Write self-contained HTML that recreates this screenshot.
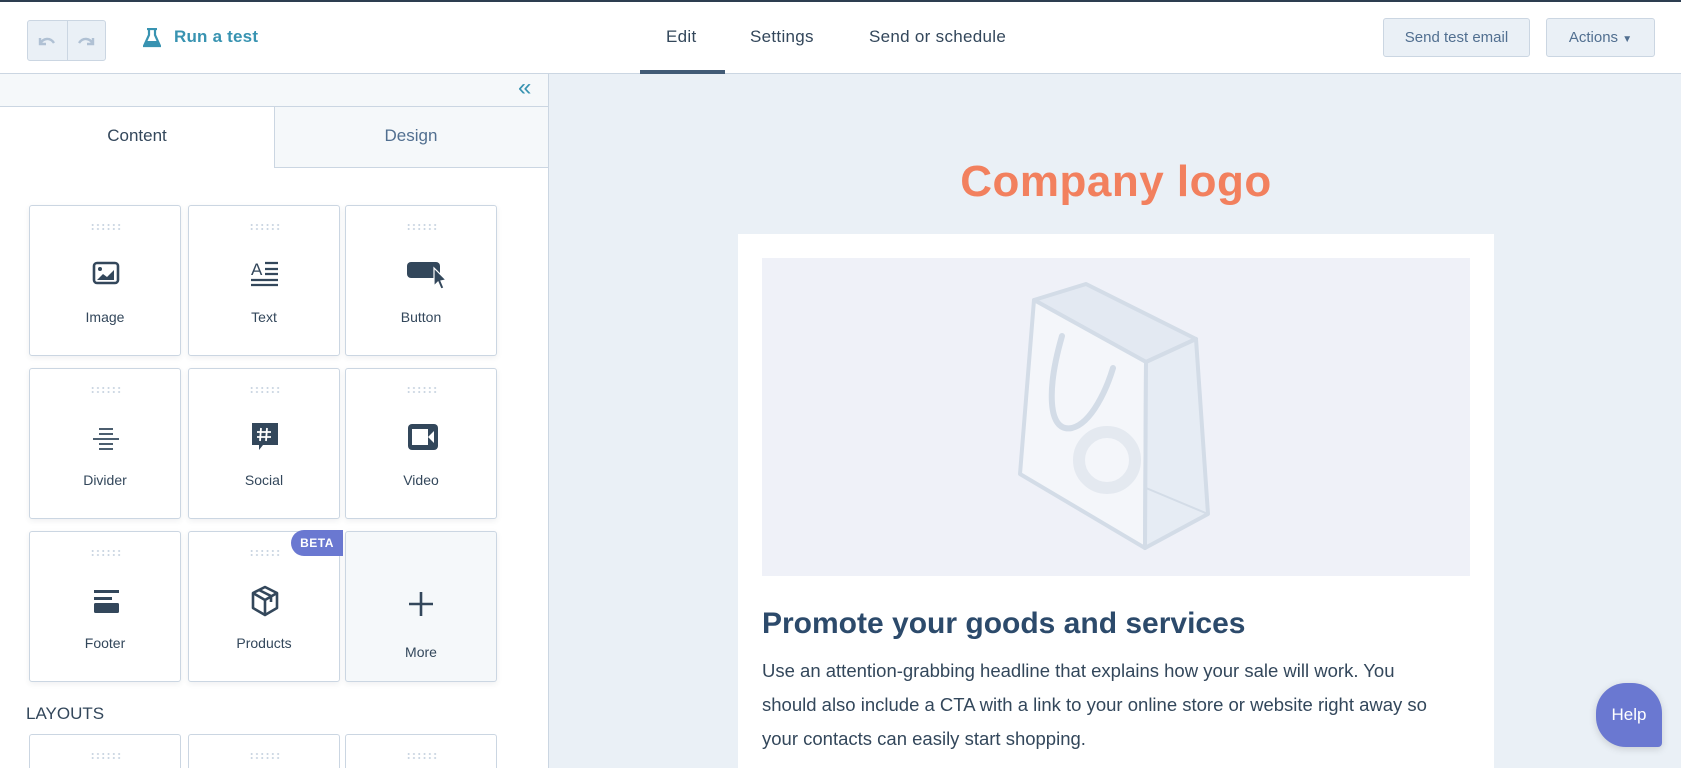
<!DOCTYPE html>
<html style="overflow:hidden;width:1681px;height:768px"><head><meta charset="utf-8"><style>
*{box-sizing:border-box;margin:0;padding:0}
body{width:1681px;height:768px;overflow:hidden;font-family:"Liberation Sans",sans-serif;background:#eaf0f6;position:relative;color:#33475b}
.abs{position:absolute}
#top{left:0;top:0;width:1681px;height:74px;background:#fff;border-top:2px solid #2d3e50;border-bottom:1px solid #cbd6e2}
.undo{left:27px;top:18px;width:79px;height:41px;border:1px solid #cbd6e2;border-radius:3px;background:#eaf0f6}
.undo div{position:absolute;left:39px;top:0;width:1px;height:39px;background:#cbd6e2}
.tab{top:25px;font-size:17px;color:#33475b;letter-spacing:.3px}
.btn{top:16px;height:39px;border:1px solid #cbd6e2;border-radius:3px;background:#eaf0f6;color:#516f90;font-size:15px;text-align:center;line-height:37px}
#left{left:0;top:74px;width:549px;height:694px;background:#fff;border-right:1px solid #cbd6e2;overflow:hidden}
.coll{left:0;top:0;width:548px;height:33px;background:#f5f8fa;border-bottom:1px solid #cbd6e2}
.card{width:152px;height:151px;border:1px solid #cbd6e2;border-radius:3px;background:#fff;box-shadow:0 2px 6px rgba(45,62,80,.08)}
.card.short{height:34px;border-bottom:none;border-radius:3px 3px 0 0;box-shadow:none}
.card .dots{position:absolute;left:60px;top:17px;width:32px;height:8px;background-image:radial-gradient(circle,#cbd6e2 0.9px,transparent 1.1px);background-size:5.3px 4px}
.card .lbl{position:absolute;left:0;width:100%;top:103px;text-align:center;font-size:14px;color:#33475b}
.card svg{position:absolute;left:61px;top:52px}
</style></head><body>
<div id="top" class="abs">
 <div class="abs undo"><div></div>
  <svg class="abs" style="left:9px;top:13px" width="20" height="14" viewBox="0 0 20 14"><path d="M3 4 L3 10 L9 10 M3 10 C6 4 13 3 17 9" fill="none" stroke="#b0c1d4" stroke-width="2.4"/></svg>
  <svg class="abs" style="left:48px;top:13px" width="20" height="14" viewBox="0 0 20 14"><path d="M17 4 L17 10 L11 10 M17 10 C14 4 7 3 3 9" fill="none" stroke="#b0c1d4" stroke-width="2.4"/></svg>
 </div>
 <svg class="abs" style="left:143px;top:26px" width="18" height="20" viewBox="0 0 18 20"><path d="M4 1 H14 M6 1 V7 L1 18 H17 L12 7 V1" fill="none" stroke="#3893b1" stroke-width="2.2"/><path d="M3 13 H15 L17 18 H1Z" fill="#3893b1"/></svg>
 <div class="abs" style="left:174px;top:25px;font-size:17px;color:#3893b1;font-weight:bold;letter-spacing:.2px">Run a test</div>
 <div class="abs tab" style="left:666px">Edit</div>
 <div class="abs tab" style="left:750px">Settings</div>
 <div class="abs tab" style="left:869px">Send or schedule</div>
 <div class="abs" style="left:640px;top:68px;width:85px;height:4px;background:#425b76"></div>
 <div class="abs btn" style="left:1383px;width:147px">Send test email</div>
 <div class="abs btn" style="left:1546px;width:109px">Actions <span style="font-size:10px">&#9660;</span></div>
</div>
<div id="left" class="abs">
 <div class="abs coll"><div class="abs" style="left:518px;top:1px;font-size:24px;color:#3893b1;line-height:26px">«</div></div>
 <div class="abs" style="left:274px;top:33px;width:274px;height:61px;background:#f5f8fa;border-left:1px solid #cbd6e2;border-bottom:1px solid #cbd6e2"></div>
 <div class="abs" style="left:0;top:52px;width:274px;text-align:center;font-size:17px;color:#33475b">Content</div>
 <div class="abs" style="left:274px;top:52px;width:274px;text-align:center;font-size:17px;color:#516f90">Design</div>

 <div class="abs card" style="left:29px;top:131px"><div class="dots"></div>
  <svg width="30" height="30" viewBox="0 0 30 30"><rect x="3" y="5" width="24" height="20" rx="3" fill="none" stroke="#33475b" stroke-width="2.6"/><circle cx="9" cy="11" r="2" fill="#33475b"/><path d="M6 22 L12 16 L16 19 L23 12 V22Z" fill="#33475b"/></svg>
  <div class="lbl">Image</div></div>
 <div class="abs card" style="left:188px;top:131px"><div class="dots"></div>
  <svg width="30" height="30" viewBox="0 0 30 30"><text x="1" y="17" font-family="Liberation Sans" font-size="17" fill="#33475b">A</text><path d="M15 5 H28 M15 11 H28 M15 16 H28 M1 22 H28 M1 27 H28" stroke="#33475b" stroke-width="2.2"/></svg>
  <div class="lbl">Text</div></div>
 <div class="abs card" style="left:345px;top:131px"><div class="dots"></div>
  <svg width="40" height="34" viewBox="0 0 40 34"><rect x="0" y="4" width="33" height="16" rx="4" fill="#33475b"/><path d="M27 10 L27 28 L31 24 L34 31 L37 30 L34 23 L39 22Z" fill="#33475b" stroke="#fff" stroke-width="1.2"/></svg>
  <div class="lbl">Button</div></div>

 <div class="abs card" style="left:29px;top:294px"><div class="dots"></div>
  <svg width="30" height="30" viewBox="0 0 30 30"><path d="M8 8 H22 M8 13 H22 M2 18 H28 M8 23 H22 M8 28 H22" stroke="#33475b" stroke-width="1.8"/></svg>
  <div class="lbl">Divider</div></div>
 <div class="abs card" style="left:188px;top:294px"><div class="dots"></div>
  <svg width="30" height="32" viewBox="0 0 30 32"><path d="M2 2 H28 V24 H13 L9 29 V24 H2Z" fill="#33475b"/><path d="M11 7 L10 20 M17 7 L16 20 M7 11 H21 M7 16 H21" stroke="#fff" stroke-width="1.8"/></svg>
  <div class="lbl">Social</div></div>
 <div class="abs card" style="left:345px;top:294px"><div class="dots"></div>
  <svg width="32" height="30" viewBox="0 0 32 30"><rect x="1" y="3" width="30" height="26" rx="4" fill="#33475b"/><rect x="5" y="8" width="16" height="16" fill="#fff"/><path d="M21 16 L27 10 V22Z" fill="#fff"/></svg>
  <div class="lbl">Video</div></div>

 <div class="abs card" style="left:29px;top:457px"><div class="dots"></div>
  <svg width="30" height="32" viewBox="0 0 30 32"><rect x="3" y="6" width="25" height="3" fill="#33475b"/><rect x="3" y="13" width="18" height="3" fill="#33475b"/><rect x="3" y="19" width="25" height="10" rx="1.5" fill="#33475b"/></svg>
  <div class="lbl">Footer</div></div>
 <div class="abs card" style="left:188px;top:457px"><div class="dots"></div>
  <svg width="30" height="34" viewBox="0 0 30 34"><path d="M15 3 L27 9 V24 L15 31 L3 24 V9Z M3 9 L15 16 L27 9 M15 16 V31 M9 6 L21 12 V18" fill="none" stroke="#33475b" stroke-width="2.6" stroke-linejoin="round"/></svg>
  <div class="lbl">Products</div></div>
 <div class="abs" style="left:291px;top:456px;width:52px;height:26px;border-radius:13px 0 0 13px;background:#6a78d1;color:#fff;font-weight:bold;font-size:12px;text-align:center;line-height:26px;letter-spacing:.5px">BETA</div>
 <div class="abs card" style="left:345px;top:457px;background:#f5f8fa"><svg style="left:59px;top:56px" width="32" height="32" viewBox="0 0 32 32"><path d="M16 4 V28 M4 16 H28" stroke="#33475b" stroke-width="2.6"/></svg><div class="lbl" style="top:112px">More</div></div>

 <div class="abs" style="left:26px;top:630px;font-size:17px;color:#33475b">LAYOUTS</div>
 <div class="abs card short" style="left:29px;top:660px"><div class="dots"></div></div>
 <div class="abs card short" style="left:188px;top:660px"><div class="dots"></div></div>
 <div class="abs card short" style="left:345px;top:660px"><div class="dots"></div></div>
</div>

<div class="abs" style="left:738px;top:157px;width:756px;text-align:center;font-size:44px;font-weight:bold;color:#f2805e;letter-spacing:.5px">Company logo</div>
<div class="abs" style="left:738px;top:234px;width:756px;height:534px;background:#fff"></div>
<div class="abs" style="left:762px;top:258px;width:708px;height:318px;background:#eff1f8">
 <svg class="abs" style="left:0;top:0" width="708" height="318" viewBox="0 0 708 318">
  <path d="M272 42 L324 26 L434 81 L384 104Z" fill="#e3e9f2" stroke="#d3dce7" stroke-width="4" stroke-linejoin="round"/>
  <path d="M272 42 L384 104 L383 290 L258 216Z" fill="#f4f6fa" stroke="#d3dce7" stroke-width="4" stroke-linejoin="round"/>
  <path d="M384 104 L434 81 L446 256 L383 290Z" fill="#e6ecf4" stroke="#d3dce7" stroke-width="4" stroke-linejoin="round"/>
  <path d="M384 230 L446 256" stroke="#d3dce7" stroke-width="2"/>
  <circle cx="345" cy="202" r="28" fill="none" stroke="#e4e9f0" stroke-width="12"/>
  <path d="M300 78 C285 130 285 175 310 170 C330 165 345 130 351 110" fill="none" stroke="#d3dce7" stroke-width="6" stroke-linecap="round"/>
 </svg>
</div>
<div class="abs" style="left:762px;top:607px;font-size:30px;font-weight:bold;color:#2c4a6b">Promote your goods and services</div>
<div class="abs" style="left:762px;top:654px;width:668px;font-size:18.5px;line-height:34px;color:#33475b">Use an attention-grabbing headline that explains how your sale will work. You should also include a CTA with a link to your online store or website right away so your contacts can easily start shopping.</div>

<div class="abs" style="left:1596px;top:683px;width:66px;height:64px;border-radius:30px 30px 4px 30px;background:#6a78d1;color:#fff;font-size:17px;text-align:center;line-height:64px;box-shadow:0 2px 8px rgba(0,0,0,.15)">Help</div>
</body></html>
